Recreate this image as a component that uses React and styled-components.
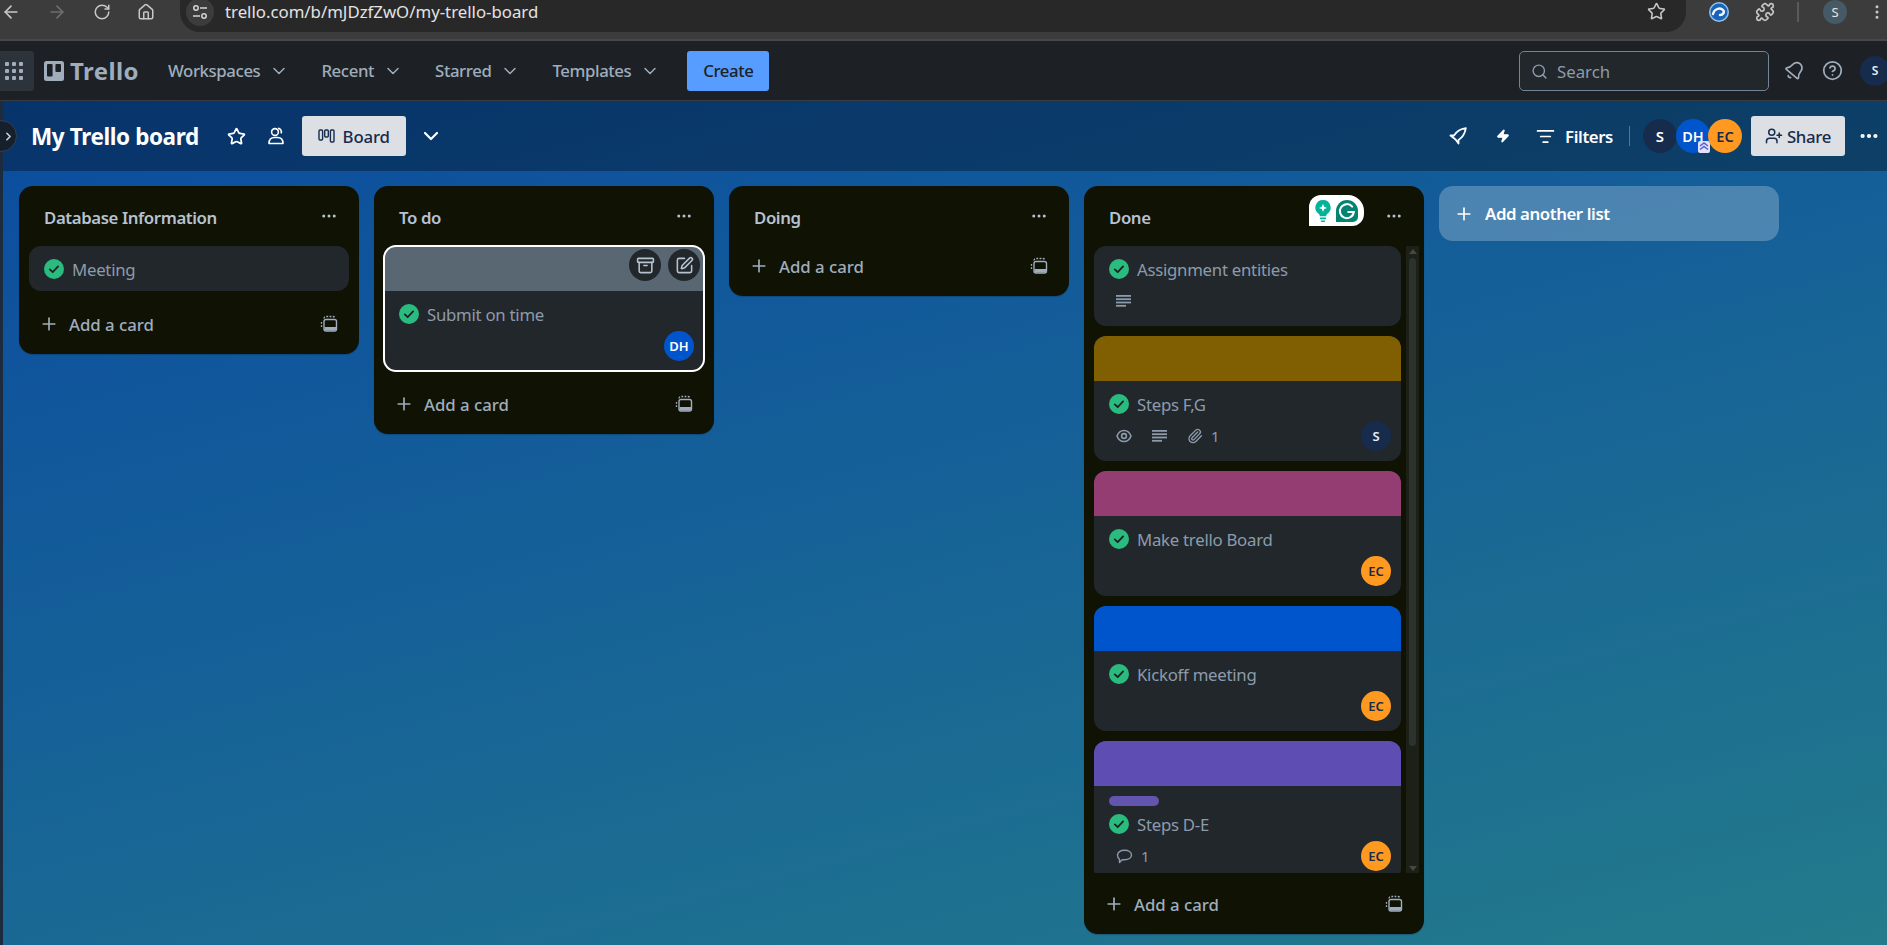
import React from "react";
import styled, { createGlobalStyle } from "styled-components";
import {
  Archive,
  ArrowLeft,
  ArrowRight,
  ChevronDown,
  ChevronRight,
  CircleHelp,
  Ellipsis,
  EllipsisVertical,
  Home,
  ListFilter,
  Paperclip,
  Plus,
  RotateCw,
  Search,
  SquarePen,
  Star,
  UserPlus,
  Zap,
  Bell,
  Puzzle,
} from "lucide-react";

const GlobalStyle = createGlobalStyle`
  html, body {
    margin: 0;
    height: 100%;
    overflow: hidden;
    background: #1d2125;
    font-family: "Noto Sans", "Open Sans", sans-serif;
  }
  * { box-sizing: border-box; }
`;

const Page = styled.div`
  width: 1887px;
  height: 945px;
  display: flex;
  flex-direction: column;
  overflow: hidden;
`;

/* browser toolbar */
const ChromeBar = styled.div`
  height: 41px;
  flex: none;
  background: #3c3c3c;
  border-bottom: 2px solid #484848;
  display: flex;
  align-items: flex-start;
  color: #c7c7c7;
`;

const ChromeNav = styled.div`
  width: 180px;
  height: 32px;
  display: flex;
  align-items: center;
  padding: 0 0 9px 1px;
  gap: 26px;
  svg { flex: none; }
`;

const UrlPill = styled.div`
  width: 1506px;
  height: 32px;
  background: #282828;
  border-radius: 0 0 20px 20px;
  display: flex;
  align-items: center;
  padding: 0 20px 9px 6px;
`;

const SiteInfo = styled.span`
  width: 28px;
  height: 28px;
  border-radius: 50%;
  background: #3c3c3c;
  display: flex;
  align-items: center;
  justify-content: center;
  margin-right: 11px;
`;

const UrlText = styled.span`
  font-size: 16.8px;
  color: #e3e3e3;
  flex: 1;
`;

const ChromeActions = styled.div`
  flex: 1;
  height: 32px;
  display: flex;
  align-items: center;
  padding: 0 0 9px 22px;
`;

const ChromeDivider = styled.span`
  width: 2px;
  height: 20px;
  background: #5a5a5a;
  margin: 0 24px 0 22px;
`;

const ProfileDot = styled.span`
  width: 24px;
  height: 24px;
  border-radius: 50%;
  background: #455a64;
  color: #e6e6e6;
  font-size: 13px;
  display: flex;
  align-items: center;
  justify-content: center;
  margin-right: 21px;
`;

/* trello nav */
const TopNav = styled.nav`
  height: 60px;
  flex: none;
  background: #1d2125;
  border-bottom: 1px solid #363c42;
  display: flex;
  align-items: center;
  color: #9fadbc;
`;

const AppsButton = styled.div`
  width: 34px;
  height: 40px;
  background: #2c333a;
  border-radius: 0 3px 3px 0;
  display: flex;
  align-items: center;
  justify-content: center;
  padding-right: 6px;
`;

const Logo = styled.div`
  display: flex;
  align-items: center;
  gap: 6px;
  margin: 0 29px 0 10px;
  width: 95px;
  font-size: 24px;
  font-weight: 700;
  letter-spacing: 0.4px;
  color: #9fadbc;
`;

const NavMenu = styled.div`
  display: flex;
  align-items: center;
  gap: 9px;
  font-size: 16.8px;
  font-weight: 500;
  margin-right: ${(p) => (p.$last ? 21 : 32)}px;
  letter-spacing: -0.4px;
`;

const CreateButton = styled.button`
  width: 82px;
  height: 40px;
  margin-left: 6px;
  border: 0;
  border-radius: 3px;
  background: #579dff;
  color: #1d2125;
  font: 500 16.8px "Noto Sans", sans-serif;
  letter-spacing: -0.4px;
`;

const SearchBox = styled.div`
  width: 250px;
  height: 40px;
  margin-left: auto;
  border: 1px solid #738496;
  border-radius: 5px;
  background: #22272b;
  display: flex;
  align-items: center;
  gap: 9px;
  padding: 1px 0 0 11px;
  font-size: 16.8px;
  color: #8c9bab;
`;

const NavIcons = styled.div`
  display: flex;
  align-items: center;
  gap: 17px;
  margin-left: 15px;
  width: 103px;
  flex: none;
`;

const NavAvatar = styled.span`
  width: 30px;
  height: 30px;
  border-radius: 50%;
  background: #172b4d;
  color: #e6edf5;
  font-size: 12px;
  font-weight: 600;
  display: flex;
  align-items: center;
  justify-content: center;
  flex: none;
`;

/* board */
const BoardShell = styled.div`
  flex: 1;
  display: flex;
  flex-direction: column;
  position: relative;
  border-left: 3px solid #1d2b3f;
  background: linear-gradient(165deg, #0b4c9f 0%, #156098 45%, #237b8b 100%);
`;

const SidebarToggle = styled.span`
  position: absolute;
  left: -18px;
  top: 19px;
  width: 32px;
  height: 32px;
  border-radius: 50%;
  background: #16202c;
  border: 1px solid #33404f;
  color: #c7d1db;
  display: flex;
  align-items: center;
  justify-content: flex-end;
  padding-right: 1px;
`;

const BoardHeader = styled.header`
  height: 70px;
  flex: none;
  background: rgba(0, 0, 0, 0.32);
  display: flex;
  align-items: center;
  padding: 0 0 0 28px;
  color: #fff;
`;

const BoardTitle = styled.h1`
  margin: 0 28px 0 0;
  font-size: 22.5px;
  font-weight: 700;
  letter-spacing: -0.4px;
`;

const HeaderIcon = styled.span`
  display: flex;
  align-items: center;
  justify-content: center;
  width: ${(p) => p.$w || 20}px;
  margin-right: ${(p) => p.$mr || 0}px;
`;

const BoardTab = styled.div`
  height: 40px;
  width: 104px;
  border-radius: 3px;
  background: #dcdfe4;
  color: #172b4d;
  display: flex;
  align-items: center;
  justify-content: center;
  gap: 8px;
  font-size: 16.8px;
  font-weight: 500;
  letter-spacing: -0.15px;
  margin-right: 13px;
`;

const HeaderRight = styled.div`
  margin-left: auto;
  display: flex;
  align-items: center;
`;

const FiltersLabel = styled.span`
  font-size: 16.8px;
  font-weight: 600;
  letter-spacing: -0.4px;
  margin: 0 16px 0 10px;
`;

const HeaderDivider = styled.span`
  width: 1px;
  height: 20px;
  background: rgba(255, 255, 255, 0.3);
  margin-right: 13px;
`;

const AvatarStack = styled.div`
  display: flex;
  margin-right: 9px;
`;

const Avatar = styled.span`
  position: relative;
  width: ${(p) => p.$size || 30}px;
  height: ${(p) => p.$size || 30}px;
  border-radius: 50%;
  background: ${(p) => p.$bg};
  color: ${(p) => p.$fg};
  font-size: ${(p) => p.$font || 13}px;
  font-weight: 600;
  display: flex;
  align-items: center;
  justify-content: center;
  flex: none;
  margin-left: ${(p) => p.$overlap || 0}px;
`;

const AdminBadge = styled.span`
  position: absolute;
  right: 0;
  bottom: 0;
  width: 12px;
  height: 12px;
  background: #dfe1ff;
  display: flex;
  border-radius: 2px;
`;

const ShareButton = styled.div`
  width: 94px;
  height: 40px;
  border-radius: 3px;
  background: #dcdfe4;
  color: #172b4d;
  display: flex;
  align-items: center;
  justify-content: center;
  gap: 4px;
  font-size: 16.8px;
  font-weight: 500;
  letter-spacing: -0.3px;
  margin-right: 13px;
`;

const Lists = styled.main`
  flex: 1;
  display: flex;
  align-items: flex-start;
  gap: 15px;
  padding: 15px 0 0 16px;
`;

const List = styled.section`
  position: relative;
  width: 340px;
  flex: none;
  background: #101204;
  border-radius: 14px;
  padding-bottom: 10px;
  box-shadow: 0 1px 1px rgba(9, 30, 66, 0.3);
`;

const ListHeader = styled.div`
  height: 60px;
  display: flex;
  align-items: center;
  justify-content: space-between;
  padding: 3px 21px 0 25px;
  color: #b6c2cf;
  svg { margin-top: -3px; }
`;

const ListName = styled.h2`
  margin: 0;
  font-size: 16.8px;
  font-weight: 600;
  letter-spacing: -0.4px;
`;

const ListCards = styled.div`
  display: flex;
  flex-direction: column;
  padding: 0 10px;
  margin-bottom: ${(p) => p.$gap}px;
`;

const ScrollArea = styled.div`
  display: flex;
  height: 627px;
  overflow: hidden;
  padding-left: 10px;
  margin-bottom: 11px;
`;

const ScrollColumn = styled.div`
  width: 307px;
  flex: none;
  display: flex;
  flex-direction: column;
  gap: 10px;
`;

const ScrollTrack = styled.div`
  width: 13px;
  margin-left: 5px;
  background: #1d2016;
  display: flex;
  flex-direction: column;
  align-items: center;
  justify-content: space-between;
  padding: 3px 0 2px;
`;

const ScrollThumb = styled.div`
  width: 7px;
  height: 488px;
  margin-top: 4px;
  margin-bottom: auto;
  border-radius: 4px;
  background: #2c322d;
`;

const ScrollArrow = styled.span`
  width: 0;
  height: 0;
  border-left: 4px solid transparent;
  border-right: 4px solid transparent;
  border-${(p) => (p.$up ? "bottom" : "top")}: 5px solid #444a42;
`;

const CardBox = styled.article`
  position: relative;
  flex: none;
  background: #22272b;
  border-radius: 12px;
  overflow: hidden;
  outline: ${(p) => (p.$active ? "2px solid #fff" : "none")};
  outline-offset: -1px;
`;

const CardCover = styled.div`
  height: 45px;
  background: ${(p) => p.$color};
`;

const CardBody = styled.div`
  padding: 10px 10px ${(p) => (p.$tight ? 9 : 10)}px 15px;
`;

const CardLabel = styled.div`
  width: 50px;
  height: 10px;
  border-radius: 5px;
  background: #6e5dc6;
  opacity: 0.85;
  margin-bottom: 5px;
`;

const TitleRow = styled.div`
  height: 26px;
  display: flex;
  align-items: center;
  gap: 8px;
  font-size: 16.8px;
  color: #8c9bab;
  letter-spacing: -0.27px;
`;

const CardFooter = styled.div`
  height: 30px;
  margin-top: ${(p) => p.$mt}px;
  display: flex;
  align-items: center;
  justify-content: space-between;
  color: #9fadbc;
`;

const Badges = styled.div`
  display: flex;
  align-items: center;
  gap: 20px;
  padding-left: 7px;
  font-size: 15px;
  color: #8c9bab;
`;

const BadgeCount = styled.span`
  display: flex;
  align-items: center;
  gap: 8px;
`;

const CardAction = styled.span`
  position: absolute;
  top: 3px;
  right: ${(p) => p.$right}px;
  width: 32px;
  height: 32px;
  border-radius: 50%;
  background: #22272b;
  color: #b6c2cf;
  display: flex;
  align-items: center;
  justify-content: center;
`;

const AddCardRow = styled.div`
  height: 40px;
  display: flex;
  align-items: center;
  padding: 0 21px 0 20px;
  gap: 10px;
  font-size: 16.8px;
  font-weight: 500;
  letter-spacing: -0.02px;
  color: #9fadbc;
  span { flex: 1; }
`;

const AddListButton = styled.div`
  width: 340px;
  height: 55px;
  flex: none;
  border-radius: 14px;
  background: rgba(255, 255, 255, 0.24);
  color: #fff;
  display: flex;
  align-items: center;
  padding: 0 0 0 15px;
  gap: 11px;
  font-size: 16.8px;
  font-weight: 600;
  letter-spacing: -0.4px;
`;

const GrammarlyWidget = styled.div`
  position: absolute;
  top: 9px;
  left: 225px;
  width: 55px;
  height: 31px;
  background: #fff;
  border-radius: 12px 16px 12px 0;
  display: flex;
  align-items: center;
  justify-content: center;
  gap: 3px;
`;

const CheckIcon = () => (
  <svg width="20" height="20" viewBox="0 0 20 20" style={{ flex: "none" }}>
    <circle cx="10" cy="10" r="10" fill="#2abb7f" />
    <path d="M5.8 10.4l2.9 2.8 5.4-5.8" fill="none" stroke="#1d2125" strokeWidth="1.8" strokeLinecap="round" strokeLinejoin="round" />
  </svg>
);

const AppsIcon = () => (
  <svg width="18" height="18" viewBox="0 0 18 18" fill="#9fadbc">
    {[0, 7, 14].flatMap((y) =>
      [0, 7, 14].map((x) => <rect key={`${x}-${y}`} x={x} y={y} width="4" height="4" rx="1" />)
    )}
  </svg>
);

const TuneIcon = () => (
  <svg width="16" height="16" viewBox="0 0 16 16" fill="none" stroke="#d4d4d4" strokeWidth="1.5">
    <circle cx="4" cy="4" r="2.2" />
    <path d="M8 4h7M1 12h7" />
    <circle cx="12" cy="12" r="2.2" />
  </svg>
);

const ExtensionLogo = () => (
  <svg width="22" height="22" viewBox="0 0 22 22" fill="none">
    <circle cx="11" cy="11" r="10" fill="#8cc4f0" />
    <circle cx="11" cy="11" r="8.5" fill="#1a63b8" />
    <path d="M5 13c1-5 7-7 10-4 2 2 0 5-3 5" stroke="#f3f8fd" strokeWidth="2.4" strokeLinecap="round" />
  </svg>
);

const TemplateIcon = () => (
  <svg width="18" height="18" viewBox="0 0 18 18" fill="none" stroke="currentColor">
    <path d="M4 3.5a2 2 0 0 1 2-2h7a2 2 0 0 1 2 2M1.5 12V7a2 2 0 0 1 .6-1.4" strokeWidth="1.3" strokeDasharray="1.8 1.4" />
    <rect x="4" y="4.5" width="12.5" height="11.5" rx="2" strokeWidth="1.4" />
    <path d="M4.5 12h11.5v2a1.5 1.5 0 0 1-1.5 1.5H6A1.5 1.5 0 0 1 4.5 14z" fill="currentColor" stroke="none" />
  </svg>
);

const TrelloMark = () => (
  <svg width="20" height="20" viewBox="0 0 20 20">
    <rect width="20" height="20" rx="2.5" fill="#9fadbc" />
    <rect x="3" y="3" width="5.6" height="12.5" rx="1" fill="#1d2125" />
    <rect x="11.4" y="3" width="5.6" height="8" rx="1" fill="#1d2125" />
  </svg>
);

const BoardIcon = () => (
  <svg width="17" height="14" viewBox="0 0 17 14" fill="none" stroke="currentColor" strokeWidth="1.4">
    <rect x="1" y="1" width="3.6" height="10" rx="1" />
    <rect x="6.7" y="1" width="3.6" height="7" rx="1" />
    <rect x="12.4" y="1" width="3.6" height="12" rx="1" />
  </svg>
);

const PeopleIcon = () => (
  <svg width="18" height="20" viewBox="0 0 18 20" fill="none" stroke="currentColor" strokeWidth="1.6">
    <circle cx="8" cy="6" r="3.4" />
    <path d="M2 17.5c0-4 2.4-6 5.5-6h3c3 0 5.5 2 5.5 6z" strokeLinejoin="round" />
    <path d="M11 2.4a3.4 3.4 0 0 1 3 5" />
  </svg>
);

const RocketIcon = () => (
  <svg width="18" height="18" viewBox="0 0 18 18" fill="none" stroke="currentColor" strokeWidth="1.8" strokeLinejoin="round">
    <path d="M16.8 1.2C11.5 2 7.5 4.5 5 8.5H1.5L5 11.2 7 13l2.5 3.5V13c4-2.5 6.5-6.5 7.3-11.8z" />
  </svg>
);

const DescriptionIcon = () => (
  <svg width="15" height="12" viewBox="0 0 15 12" fill="currentColor">
    <rect y="0" width="15" height="1.8" />
    <rect y="3.3" width="15" height="1.8" />
    <rect y="6.6" width="15" height="1.8" />
    <rect y="9.9" width="10" height="1.8" />
  </svg>
);

const WatchIcon = () => (
  <svg width="16" height="16" viewBox="0 0 16 16" fill="none" stroke="currentColor" strokeWidth="1.6">
    <path d="M1 8C2.5 4 5 2.5 8 2.5S13.5 4 15 8C13.5 12 11 13.5 8 13.5S2.5 12 1 8z" />
    <circle cx="8" cy="8" r="2.4" />
  </svg>
);

const CommentIcon = () => (
  <svg width="17" height="15" viewBox="0 0 16 15" fill="none" stroke="currentColor" strokeWidth="1.4" strokeLinejoin="round">
    <path d="M8 1.2c4 0 7 2 7 4.8s-3 4.8-7 4.8c-.8 0-1.3 0-2-.2L3 13.5v-3.3C1.8 9.2 1 7.8 1 6c0-2.8 3-4.8 7-4.8z" />
  </svg>
);

const GrammarlyBulb = () => (
  <svg width="18" height="24" viewBox="0 0 18 24">
    <path d="M9 1a7.6 7.6 0 0 0-4.4 13.8c.9.7 1.2 1.5 1.2 2.4h6.4c0-.9.3-1.7 1.2-2.4A7.6 7.6 0 0 0 9 1z" fill="#00b39b" />
    <path d="M9 4.8l1.2 2.9 2.9 1.2-2.9 1.2L9 13l-1.2-2.9-2.9-1.2 2.9-1.2z" fill="#fff" />
    <rect x="5.8" y="18.6" width="6.4" height="1.6" rx=".8" fill="#00b39b" />
    <rect x="6.8" y="21.4" width="4.4" height="1.6" rx=".8" fill="#00b39b" />
  </svg>
);

const GrammarlyG = () => (
  <svg width="24" height="24" viewBox="0 0 24 24">
    <path d="M12 1a11 11 0 0 1 11 11v6a5 5 0 0 1-5 5H1V12A11 11 0 0 1 12 1z" fill="#028470" />
    <path d="M17.2 7.6A7 7 0 1 0 18.8 13h-5.6" fill="none" stroke="#fff" strokeWidth="2" strokeLinecap="round" />
  </svg>
);

const MemberAvatar = ({ who }) => {
  const look = {
    S: { $bg: "#172b4d", $fg: "#e6edf5" },
    DH: { $bg: "#0055cc", $fg: "#ffffff" },
    EC: { $bg: "#ff991f", $fg: "#172b4d" },
  }[who];
  return <Avatar {...look}>{who}</Avatar>;
};

const Card = ({ title, cover, label, member, badges, active, tight }) => (
  <CardBox $active={active}>
    {cover && <CardCover $color={cover} />}
    {active && (
      <>
        <CardAction $right={43}><Archive size={19} /></CardAction>
        <CardAction $right={4}><SquarePen size={19} /></CardAction>
      </>
    )}
    <CardBody $tight={tight}>
      {label && <CardLabel />}
      <TitleRow>
        <CheckIcon />
        {title}
      </TitleRow>
      {!tight && (
        <CardFooter $mt={4}>
          <Badges>{badges}</Badges>
          {member && <MemberAvatar who={member} />}
        </CardFooter>
      )}
    </CardBody>
  </CardBox>
);

const ListTop = ({ name }) => (
  <ListHeader>
    <ListName>{name}</ListName>
    <Ellipsis size={18} />
  </ListHeader>
);

const AddCard = () => (
  <AddCardRow>
    <Plus size={20} />
    <span>Add a card</span>
    <TemplateIcon />
  </AddCardRow>
);

const NavItem = ({ children, last }) => (
  <NavMenu $last={last}>
    {children}
    <ChevronDown size={20} strokeWidth={1.8} />
  </NavMenu>
);

export default function App() {
  return (
    <Page>
      <GlobalStyle />
      <ChromeBar>
        <ChromeNav>
          <ArrowLeft size={20} />
          <ArrowRight size={20} color="#6e6e6e" />
          <RotateCw size={18} />
          <Home size={18} />
        </ChromeNav>
        <UrlPill>
          <SiteInfo><TuneIcon /></SiteInfo>
          <UrlText>trello.com/b/mJDzfZwO/my-trello-board</UrlText>
          <Star size={19} />
        </UrlPill>
        <ChromeActions>
          <ExtensionLogo />
          <Puzzle size={20} style={{ marginLeft: 25 }} />
          <ChromeDivider />
          <ProfileDot>S</ProfileDot>
          <EllipsisVertical size={18} />
        </ChromeActions>
      </ChromeBar>

      <TopNav>
        <AppsButton><AppsIcon /></AppsButton>
        <Logo>
          <TrelloMark />
          Trello
        </Logo>
        <NavItem>Workspaces</NavItem>
        <NavItem>Recent</NavItem>
        <NavItem>Starred</NavItem>
        <NavItem last>Templates</NavItem>
        <CreateButton>Create</CreateButton>
        <SearchBox>
          <Search size={17} />
          Search
        </SearchBox>
        <NavIcons>
          <Bell size={21} style={{ transform: "rotate(40deg)", flex: "none" }} />
          <CircleHelp size={21} style={{ flex: "none" }} />
          <NavAvatar>S</NavAvatar>
        </NavIcons>
      </TopNav>

      <BoardShell>
        <SidebarToggle><ChevronRight size={13} strokeWidth={3} /></SidebarToggle>
        <BoardHeader>
          <BoardTitle>My Trello board</BoardTitle>
          <HeaderIcon $mr={19}><Star size={19} strokeWidth={2.2} /></HeaderIcon>
          <HeaderIcon $mr={16}><PeopleIcon /></HeaderIcon>
          <BoardTab>
            <BoardIcon />
            Board
          </BoardTab>
          <ChevronDown size={24} strokeWidth={2.2} />
          <HeaderRight>
            <HeaderIcon $mr={25}><RocketIcon /></HeaderIcon>
            <HeaderIcon $mr={23}><Zap size={14} fill="#fff" /></HeaderIcon>
            <ListFilter size={19} strokeWidth={2.2} />
            <FiltersLabel>Filters</FiltersLabel>
            <HeaderDivider />
            <AvatarStack>
              <Avatar $size={34} $font={15} $bg="#172b4d" $fg="#fff">S</Avatar>
              <Avatar $size={34} $font={14.5} $overlap={-1} $bg="#0055cc" $fg="#fff">
                DH
                <AdminBadge>
                  <svg width="12" height="12" viewBox="0 0 12 12" fill="none" stroke="#5b5fc7" strokeWidth="1.5">
                    <path d="M2 5l4-3 4 3M2 8.5l4-3 4 3" />
                  </svg>
                </AdminBadge>
              </Avatar>
              <Avatar $size={34} $font={14.5} $overlap={-2} $bg="#ff991f" $fg="#172b4d">EC</Avatar>
            </AvatarStack>
            <ShareButton>
              <UserPlus size={18} />
              Share
            </ShareButton>
            <Ellipsis size={22} strokeWidth={2.6} style={{ marginRight: 7 }} />
          </HeaderRight>
        </BoardHeader>

        <Lists>
          <List>
            <ListTop name="Database Information" />
            <ListCards $gap={13}>
              <Card title="Meeting" tight />
            </ListCards>
            <AddCard />
          </List>

          <List>
            <ListTop name="To do" />
            <ListCards $gap={13}>
              <Card title="Submit on time" cover="#596773" member="DH" active />
            </ListCards>
            <AddCard />
          </List>

          <List>
            <ListTop name="Doing" />
            <AddCard />
          </List>

          <List>
            <ListTop name="Done" />
            <GrammarlyWidget>
              <GrammarlyBulb />
              <GrammarlyG />
            </GrammarlyWidget>
            <ScrollArea>
              <ScrollColumn>
                <Card title="Assignment entities" badges={<DescriptionIcon />} />
                <Card
                  title="Steps F,G"
                  cover="#7f5f01"
                  member="S"
                  badges={
                    <>
                      <WatchIcon />
                      <DescriptionIcon />
                      <BadgeCount><Paperclip size={16} />1</BadgeCount>
                    </>
                  }
                />
                <Card title="Make trello Board" cover="#943d73" member="EC" />
                <Card title="Kickoff meeting" cover="#0055cc" member="EC" />
                <Card
                  title="Steps D-E"
                  cover="#5e4db2"
                  label
                  member="EC"
                  badges={<BadgeCount><CommentIcon />1</BadgeCount>}
                />
              </ScrollColumn>
              <ScrollTrack>
                <ScrollArrow $up />
                <ScrollThumb />
                <ScrollArrow />
              </ScrollTrack>
            </ScrollArea>
            <AddCard />
          </List>

          <AddListButton>
            <Plus size={20} />
            Add another list
          </AddListButton>
        </Lists>
      </BoardShell>
    </Page>
  );
}
